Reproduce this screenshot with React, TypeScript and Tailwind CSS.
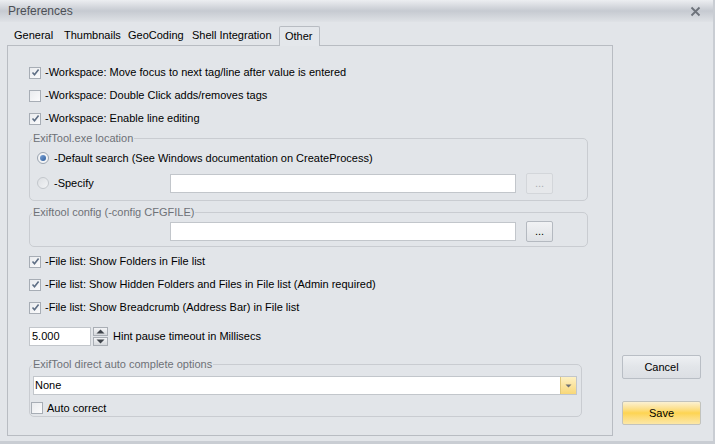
import React from 'react';

const font = { fontFamily: '"Liberation Sans", Arial, sans-serif' };

const CheckBox: React.FC<{ checked?: boolean }> = ({ checked }) => (
  <span className="flex h-[12px] w-[12px] shrink-0 items-center justify-center border border-[#a7adb5] bg-gradient-to-br from-[#e9ebee] to-[#fbfbfc]">
    {checked && (
      <svg width="9" height="9" viewBox="0 0 9 9">
        <path d="M1.5 4.5 L3.5 6.8 L7.6 1.5" fill="none" stroke="#5f6f85" strokeWidth="1.6" />
      </svg>
    )}
  </span>
);

const Radio: React.FC<{ checked?: boolean }> = ({ checked }) => (
  <span
    className={`flex h-[12px] w-[12px] shrink-0 items-center justify-center rounded-full border ${
      checked ? 'border-[#9aa4b0] bg-[#f3f4f6]' : 'border-[#c3c7cc] bg-gradient-to-br from-[#dcdfe3] to-[#f3f4f6]'
    }`}
  >
    {checked && <span className="h-[6px] w-[6px] rounded-full bg-gradient-to-br from-[#7ea4d6] to-[#2f5f9e]" />}
  </span>
);

const CheckRow: React.FC<{ checked?: boolean; label: string }> = ({ checked, label }) => (
  <div className="flex h-[23px] items-center gap-[4px] pl-[21px]">
    <CheckBox checked={checked} />
    <span>{label}</span>
  </div>
);

const DotsButton: React.FC<{ disabled?: boolean }> = ({ disabled }) => (
  <button
    className={`ml-[10px] flex h-[21px] w-[27px] items-center justify-center rounded-[2px] border text-[11px] leading-none ${
      disabled
        ? 'border-[#d3d6da] bg-[#e6e8eb] text-[#a9adb2]'
        : 'border-[#b4b9c0] bg-gradient-to-b from-[#f1f2f4] to-[#dfe2e6] text-black'
    }`}
  >
    ...
  </button>
);

const GroupBox: React.FC<{ label: string; className: string; children: React.ReactNode }> = ({
  label,
  className,
  children,
}) => (
  <fieldset className={`ml-[21px] rounded-[5px] border border-[#c9ccd1] ${className}`}>
    <legend className="ml-[2px] h-[14px] px-[1px] leading-[14px] text-[#6e7177]">{label}</legend>
    {children}
  </fieldset>
);

export default function App() {
  return (
    <div
      className="flex h-[444px] w-[715px] flex-col overflow-hidden border-b-[3px] border-r-[2px] border-[#c9cdd3] bg-[#e2e5e9] text-[11px] text-black"
      style={font}
    >
      {/* Title bar */}
      <div className="flex h-[22px] shrink-0 items-center justify-between bg-gradient-to-b from-[#eceef1] via-[#c6cad1] to-[#dfe2e6] pl-[8px] pr-[12px]">
        <span className="text-[12px] text-[#4c4f55]">Preferences</span>
        <svg width="11" height="11" viewBox="0 0 11 11">
          <path d="M1.5 1.5 L9.5 9.5 M9.5 1.5 L1.5 9.5" stroke="#6d727a" strokeWidth="1.8" />
        </svg>
      </div>

      <div className="flex flex-1">
        {/* Left: tabs + page */}
        <div className="ml-[7px] flex w-[606px] flex-col">
          <div className="flex h-[23px] items-end pl-[7px]">
            <span className="w-[50px] pb-[2px]">General</span>
            <span className="w-[64px] pb-[2px]">Thumbnails</span>
            <span className="w-[64px] pb-[2px]">GeoCoding</span>
            <span className="w-[87px] pb-[2px]">Shell Integration</span>
            <span className="relative -mb-px flex h-[20px] w-[41px] items-center rounded-t-[2px] border border-b-0 border-[#b8bcc2] bg-[#e4e7eb] pl-[5px]">
              Other
            </span>
          </div>

          <div className="flex h-[391px] flex-col border border-[#b8bcc2] pt-[15px]">
            <CheckRow checked label="-Workspace: Move focus to next tag/line after value is entered" />
            <CheckRow label="-Workspace: Double Click adds/removes tags" />
            <CheckRow checked label="-Workspace: Enable line editing" />

            <GroupBox label="ExifTool.exe location" className="mt-[1px] h-[70px] w-[559px]">
              <div className="flex h-[24px] items-center gap-[5px] pl-[7px] pt-[2px]">
                <Radio checked />
                <span>-Default search (See Windows documentation on CreateProcess)</span>
              </div>
              <div className="flex h-[28px] items-center pl-[7px]">
                <Radio />
                <span className="ml-[5px] w-[116px]">-Specify</span>
                <div className="h-[19px] w-[346px] border border-[#c2c6cb] bg-white" />
                <DotsButton disabled />
              </div>
            </GroupBox>

            <GroupBox label="Exiftool config (-config CFGFILE)" className="mt-[4px] h-[42px] w-[559px]">
              <div className="flex h-[24px] items-center pl-[140px]">
                <div className="h-[19px] w-[346px] border border-[#c2c6cb] bg-white" />
                <DotsButton />
              </div>
            </GroupBox>

            <div className="mt-[3px]">
              <CheckRow checked label="-File list: Show Folders in File list" />
              <CheckRow checked label="-File list: Show Hidden Folders and Files in File list (Admin required)" />
              <CheckRow checked label="-File list: Show Breadcrumb (Address Bar) in File list" />
            </div>

            <div className="mt-[6px] flex h-[22px] items-center pl-[21px]">
              <div className="flex h-[19px] w-[62px] items-center border border-[#c2c6cb] bg-white pl-[2px]">5.000</div>
              <div className="ml-[2px] flex flex-col gap-px">
                <span className="flex h-[9px] w-[15px] items-center justify-center border border-[#a9aeb5] bg-gradient-to-b from-[#f3f4f6] to-[#d6d9dd]">
                  <svg width="9" height="5" viewBox="0 0 9 5">
                    <path d="M0.5 4.5 L4.5 0.5 L8.5 4.5 Z" fill="#3f444b" />
                  </svg>
                </span>
                <span className="flex h-[9px] w-[15px] items-center justify-center border border-[#a9aeb5] bg-gradient-to-b from-[#f3f4f6] to-[#d6d9dd]">
                  <svg width="9" height="5" viewBox="0 0 9 5">
                    <path d="M0.5 0.5 L4.5 4.5 L8.5 0.5 Z" fill="#3f444b" />
                  </svg>
                </span>
              </div>
              <span className="ml-[5px]">Hint pause timeout in Millisecs</span>
            </div>

            <GroupBox label="ExifTool direct auto complete options" className="mt-[10px] h-[60px] w-[553px]">
              <div className="ml-[3px] mt-[5px] flex h-[19px] w-[544px] items-center border border-[#c2c6cb] bg-white">
                <span className="flex-1 pl-[1px]">None</span>
                <span className="flex h-[17px] w-[16px] items-center justify-center border-l border-[#e0c77a] bg-gradient-to-b from-[#fdf1c4] to-[#f8d777]">
                  <svg width="7" height="4" viewBox="0 0 7 4">
                    <path d="M0.5 0.5 L3.5 3.5 L6.5 0.5 Z" fill="#6d6f74" />
                  </svg>
                </span>
              </div>
              <div className="mt-[5px] flex h-[16px] items-center gap-[4px] pl-[1px]">
                <CheckBox />
                <span>Auto correct</span>
              </div>
            </GroupBox>
          </div>
        </div>

        {/* Right: buttons */}
        <div className="ml-[9px] flex flex-col pt-[333px]">
          <button className="flex h-[24px] w-[79px] items-center justify-center rounded-[2px] border border-[#b9bec5] bg-gradient-to-b from-[#eef0f3] via-[#e2e5e9] to-[#dcdfe4]">
            Cancel
          </button>
          <button className="mt-[22px] flex h-[24px] w-[79px] items-center justify-center rounded-[2px] border border-[#c2c3bd] bg-gradient-to-b from-[#fbf1d2] via-[#fdd451] to-[#fce7a6]">
            Save
          </button>
        </div>
      </div>
    </div>
  );
}
